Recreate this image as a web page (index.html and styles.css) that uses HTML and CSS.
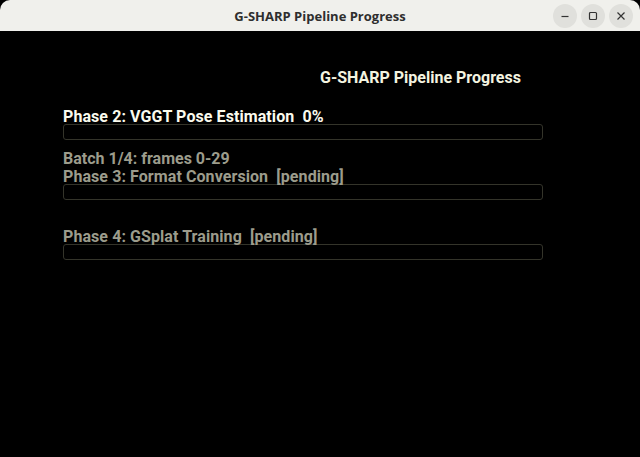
FILE: index.html
```html
<!DOCTYPE html>
<html lang="en">
<head>
    <meta charset="UTF-8">
    <meta name="viewport" content="width=device-width, initial-scale=1.0">
    <title>G-SHARP Pipeline Progress</title>
    <link rel="stylesheet" href="styles.css">
</head>
<body>
    <div class="window">
        <div class="titlebar">
            <span class="titlebar-title">G-SHARP Pipeline Progress</span>
            <div class="titlebar-buttons">
                <span class="win-btn">
                    <svg width="10" height="10" viewBox="0 0 10 10"><path d="M1.5 5.5h7" stroke="#333" stroke-width="1.2"/></svg>
                </span>
                <span class="win-btn">
                    <svg width="10" height="10" viewBox="0 0 10 10"><rect x="1.5" y="1.5" width="7" height="7" rx="1" fill="none" stroke="#333" stroke-width="1.2"/></svg>
                </span>
                <span class="win-btn">
                    <svg width="10" height="10" viewBox="0 0 10 10"><path d="M1.5 1.5l7 7M8.5 1.5l-7 7" stroke="#333" stroke-width="1.2"/></svg>
                </span>
            </div>
        </div>

        <div class="content">
            <h1 class="heading">G-SHARP Pipeline Progress</h1>

            <div class="phase active">
                <div class="phase-label">Phase 2: VGGT Pose Estimation&nbsp;&nbsp;0%</div>
                <div class="bar"><div class="bar-fill" style="width: 0%"></div></div>
                <div class="phase-status">Batch 1/4: frames 0-29</div>
            </div>

            <div class="phase">
                <div class="phase-label">Phase 3: Format Conversion&nbsp;&nbsp;[pending]</div>
                <div class="bar"><div class="bar-fill" style="width: 0%"></div></div>
                <div class="phase-status"></div>
            </div>

            <div class="phase">
                <div class="phase-label">Phase 4: GSplat Training&nbsp;&nbsp;[pending]</div>
                <div class="bar"><div class="bar-fill" style="width: 0%"></div></div>
                <div class="phase-status"></div>
            </div>
        </div>
    </div>
</body>
</html>
```

FILE: styles.css
```css
html, body {
    margin: 0;
    height: 100%;
    background-color: #000;
}
.window {
    height: 100%;
    display: flex;
    flex-direction: column;
    background-color: #000;
}
.titlebar {
    height: 31px;
    flex-shrink: 0;
    position: relative;
    display: flex;
    align-items: center;
    justify-content: center;
    background-color: #f0f0ec;
    border-radius: 10px 10px 0 0;
}
.titlebar-title {
    font-family: "Open Sans", sans-serif;
    font-weight: 700;
    font-size: 13px;
    color: #2e2e2e;
}
.titlebar-buttons {
    position: absolute;
    right: 7px;
    top: 4px;
    display: flex;
    gap: 4px;
}
.win-btn {
    width: 24px;
    height: 24px;
    border-radius: 50%;
    background-color: #e0e0dc;
    display: flex;
    align-items: center;
    justify-content: center;
}
.content {
    padding: 37px 97px 0 63px;
    font-family: Roboto, sans-serif;
    font-weight: 700;
    font-size: 16px;
}
.heading {
    margin: 0 0 23px 257px;
    font-size: 16px;
    line-height: 19px;
    color: #f4f4e0;
}
.phase {
    margin-bottom: 2px;
    color: #9c9c8c;
}
.phase.active {
    color: #fbfbee;
}
.phase-label {
    line-height: 14px;
    white-space: nowrap;
    letter-spacing: 0.08px;
}
.bar {
    height: 14px;
    border: 1px solid #34342a;
    border-radius: 3px;
}
.bar-fill {
    height: 100%;
    background-color: #4a8a3a;
}
.phase-status {
    margin-top: 9px;
    height: 19px;
    line-height: 19px;
    color: #9c9c8c;
}
```
